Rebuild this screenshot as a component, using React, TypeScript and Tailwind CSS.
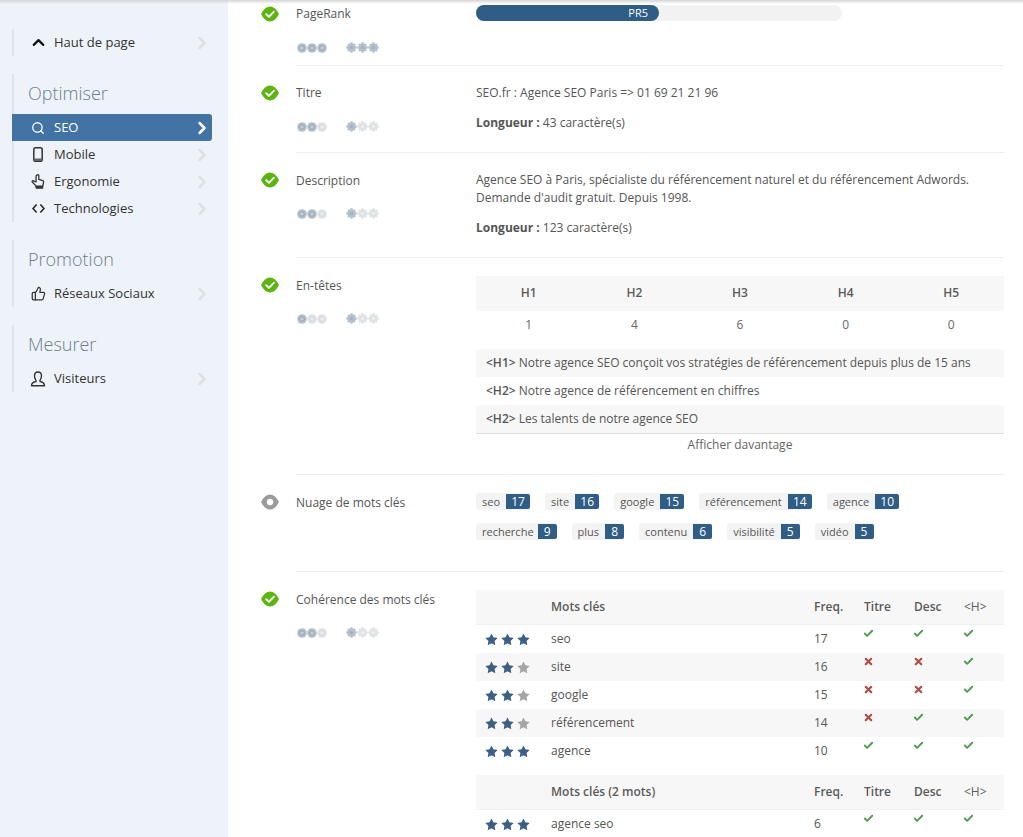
import React from "react";
import { ChevronUp, ChevronRight, Search, ThumbsUp, Check, X } from "lucide-react";

const font = { fontFamily: '"Open Sans", sans-serif' };

function Leaf({ kind }: { kind: "ok" | "eye" }) {
  const fill = kind === "ok" ? "#5cb50f" : "#9b9b9b";
  return (
    <svg width="18" height="16" viewBox="0 0 18 16" className="ml-px">
      <path d="M0 8 C2.5 3 5.5 0.5 9 0.5 C12.5 0.5 15.5 3 18 8 C15.5 13 12.5 15.5 9 15.5 C5.5 15.5 2.5 13 0 8 Z" fill={fill} />
      {kind === "ok" ? (
        <path d="M5.2 8.2 L8 10.8 L12.8 5.8" fill="none" stroke="#fff" strokeWidth="1.9" strokeLinecap="round" strokeLinejoin="round" />
      ) : (
        <circle cx="9" cy="8" r="3.2" fill="#fff" />
      )}
    </svg>
  );
}

function Target({ on }: { on: boolean }) {
  const c = on ? "#b4c1cc" : "#e0e3e6";
  return (
    <svg width="10" height="10" viewBox="0 0 10 10">
      <circle cx="5" cy="5" r="4.8" fill={c} />
      <circle cx="5" cy="5" r="2.3" fill={on ? "#c6d0d9" : "#eceef0"} stroke={on ? "#8fa2b2" : "#d2d6da"} strokeWidth="1" />
    </svg>
  );
}

function Gear({ on }: { on: boolean }) {
  const c = on ? "#b4c1cc" : "#e0e3e6";
  return (
    <svg width="11" height="11" viewBox="0 0 11 11">
      <g stroke={c} strokeWidth="2.4">
        <line x1="5.5" y1="0.3" x2="5.5" y2="10.7" />
        <line x1="0.3" y1="5.5" x2="10.7" y2="5.5" />
        <line x1="2" y1="2" x2="9" y2="9" />
        <line x1="9" y1="2" x2="2" y2="9" />
      </g>
      <circle cx="5.5" cy="5.5" r="4" fill={c} />
      <circle cx="5.5" cy="5.5" r="1.5" fill={on ? "#9fb0be" : "#eef0f2"} />
    </svg>
  );
}

function Rating({ a, b }: { a: number; b: number }) {
  return (
    <div className="flex items-center gap-[18px] pl-px">
      <div className="flex w-[31px]">
        {[0, 1, 2].map((i) => (
          <Target key={i} on={i < a} />
        ))}
      </div>
      <div className="flex">
        {[0, 1, 2].map((i) => (
          <Gear key={i} on={i < b} />
        ))}
      </div>
    </div>
  );
}

function Row({
  icon = "ok",
  label,
  rating,
  h,
  pt,
  leafClass,
  labelClass,
  gapClass,
  children,
}: {
  icon?: "ok" | "eye";
  label: string;
  rating?: [number, number];
  h: string;
  pt: string;
  leafClass?: string;
  labelClass?: string;
  gapClass?: string;
  children: React.ReactNode;
}) {
  return (
    <div className={`flex ${h}`}>
      <div className={`w-9 shrink-0 ${pt} ${leafClass ?? ""}`}>
        <Leaf kind={icon} />
      </div>
      <div className={`flex flex-1 border-b border-[#eeeeee] ${pt}`}>
        <div className="w-[180px] shrink-0">
          <div className={`text-[12px] leading-[16px] text-[#555555] ${labelClass ?? "mt-px"}`}>{label}</div>
          {rating && (
            <div className={gapClass ?? "mt-[19px]"}>
              <Rating a={rating[0]} b={rating[1]} />
            </div>
          )}
        </div>
        <div className="flex-1 min-w-0">{children}</div>
      </div>
    </div>
  );
}

function NavItem({
  icon,
  label,
  active,
}: {
  icon: React.ReactNode;
  label: string;
  active?: boolean;
}) {
  return (
    <div
      className={`flex items-center h-[27px] text-[13px] ${
        active
          ? "-ml-0.5 pl-[15px] w-[200px] bg-[#4273a4] text-white rounded-r-[3px]"
          : "pl-[13px] w-[198px] text-[#333333]"
      }`}
    >
      <span className={`w-[22px] flex justify-center shrink-0 ${active ? "text-white" : "text-[#333333]"}`}>{icon}</span>
      <span className="ml-[5px] flex-1">{label}</span>
      <ChevronRight size={20} strokeWidth={3} className={active ? "text-white" : "text-[#dde1e6]"} />
    </div>
  );
}

function NavTitle({ children }: { children: string }) {
  return <div className="h-[40px] pl-[14px] pt-[5px] text-[18px] leading-[28px] font-light text-[#6b7f8f]">{children}</div>;
}

function Tag({ t, n, tight }: { t: string; n: number; tight?: boolean }) {
  return (
    <div className="flex items-center h-[17px] bg-[#f3f3f3] rounded-[3px] text-[11px] text-[#555555]">
      <span className={`pl-[6px] pt-px ${tight ? "pr-[4px]" : "pr-[6px]"}`}>{t}</span>
      <span
        className={`h-[15px] text-center bg-[#2f5d85] text-white text-[12px] leading-[16px] rounded-r-[2px] ${
          n >= 10 ? "w-[24px]" : "w-[19px]"
        }`}
      >
        {n}
      </span>
    </div>
  );
}

function Star({ on }: { on: boolean }) {
  return (
    <svg width="13" height="13" viewBox="0 0 24 24">
      <path
        d="M12 0.8 L15.5 8 L23.4 9.2 L17.7 14.8 L19 22.8 L12 19 L5 22.8 L6.3 14.8 L0.6 9.2 L8.5 8 Z"
        fill={on ? "#3c5f84" : "#a5a5a5"}
      />
    </svg>
  );
}

const cols = "grid grid-cols-[75px_263px_50px_50px_50px_1fr] items-center";

function KeyHeader({ title }: { title: string }) {
  return (
    <div className={`${cols} h-[35px] bg-[#f7f7f7] border-b border-[#f0f0f0] text-[12px] font-semibold text-[#5a5a5a]`}>
      <span />
      <span>{title}</span>
      <span>Freq.</span>
      <span>Titre</span>
      <span>Desc</span>
      <span className="font-normal">&lt;H&gt;</span>
    </div>
  );
}

function Mark({ ok }: { ok: boolean }) {
  return (
    <span className="block -mt-[12px] -ml-px">
      {ok ? (
        <Check size={11} strokeWidth={4} className="text-[#4f9a4f]" />
      ) : (
        <X size={11} strokeWidth={4.5} className="text-[#b04a45]" />
      )}
    </span>
  );
}

function KeyRow({
  stars,
  word,
  freq,
  marks,
  alt,
}: {
  stars: number;
  word: string;
  freq: number;
  marks: [boolean, boolean, boolean];
  alt?: boolean;
}) {
  return (
    <div className={`${cols} h-[28px] text-[12px] text-[#555555] ${alt ? "bg-[#f7f7f7]" : ""}`}>
      <div className="flex gap-[3px] pl-[9px]">
        {[0, 1, 2].map((i) => (
          <Star key={i} on={i < stars} />
        ))}
      </div>
      <span>{word}</span>
      <span>{freq}</span>
      {marks.map((m, i) => (
        <Mark key={i} ok={m} />
      ))}
    </div>
  );
}

export default function App() {
  const tags1: [string, number][] = [
    ["seo", 17],
    ["site", 16],
    ["google", 15],
    ["référencement", 14],
    ["agence", 10],
  ];
  const tags2: [string, number][] = [
    ["recherche", 9],
    ["plus", 8],
    ["contenu", 6],
    ["visibilité", 5],
    ["vidéo", 5],
  ];
  const headings = ["H1", "H2", "H3", "H4", "H5"];
  const counts = [1, 4, 6, 0, 0];
  return (
    <div style={font} className="relative flex h-[837px] w-[1023px] overflow-hidden bg-white">
      <div className="absolute inset-x-0 top-0 h-[4px] bg-gradient-to-b from-[#d5d5d5] to-transparent" />
      <aside className="w-[228px] shrink-0 bg-[#eef2f9] pt-[29px] pl-[12px] flex flex-col gap-[18px]">
        <div className="border-l-2 border-[#dde3ea]">
          <NavItem icon={<ChevronUp size={19} strokeWidth={2.8} className="text-[#111111]" />} label="Haut de page" />
        </div>
        <div className="border-l-2 border-[#dde3ea]">
          <NavTitle>Optimiser</NavTitle>
          <NavItem icon={<Search size={14} strokeWidth={2.2} />} label="SEO" active />
          <NavItem
            icon={
              <svg width="10" height="15" viewBox="0 0 10 15">
                <rect x="0.8" y="0.8" width="8.4" height="13.4" rx="1.8" fill="none" stroke="#333" strokeWidth="1.5" />
                <rect x="1" y="11.5" width="8" height="2.6" fill="#666" />
              </svg>
            }
            label="Mobile"
          />
          <NavItem
            icon={
              <svg width="14" height="15" viewBox="0 0 14 15">
                <path
                  d="M6 1 Q7 0.4 7.8 1.2 L7.8 5.4 L11.8 6.6 Q12.8 7 12.6 8.2 L11.8 12 L11.6 14 L5.2 14 L4.8 11.6 L1.2 8 Q0.8 6.8 2 6.6 L5 8 L5 2 Z"
                  fill="none"
                  stroke="#333"
                  strokeWidth="1.3"
                  strokeLinejoin="round"
                />
                <rect x="5" y="11.5" width="6.8" height="2.6" fill="#333" />
              </svg>
            }
            label="Ergonomie"
          />
          <NavItem
            icon={
              <svg width="13" height="11" viewBox="0 0 13 11">
                <path d="M4.6 1.5 L1 5.5 L4.6 9.5 M8.4 1.5 L12 5.5 L8.4 9.5" fill="none" stroke="#222" strokeWidth="1.5" />
              </svg>
            }
            label="Technologies"
          />
        </div>
        <div className="border-l-2 border-[#dde3ea]">
          <NavTitle>Promotion</NavTitle>
          <NavItem icon={<ThumbsUp size={15} strokeWidth={2} />} label="Réseaux Sociaux" />
        </div>
        <div className="border-l-2 border-[#dde3ea]">
          <NavTitle>Mesurer</NavTitle>
          <NavItem
            icon={
              <svg width="16" height="16" viewBox="0 0 16 16">
                <path
                  d="M8 1 C5.5 1 4.5 3 4.5 5 C4.5 7 5.5 8.5 6 9.5 L6 10.5 C4 11 1.5 11.5 1.5 14.8 L14.5 14.8 C14.5 11.5 12 11 10 10.5 L10 9.5 C10.5 8.5 11.5 7 11.5 5 C11.5 3 10.5 1 8 1 Z"
                  fill="none"
                  stroke="#333"
                  strokeWidth="1.4"
                  strokeLinejoin="round"
                />
              </svg>
            }
            label="Visiteurs"
          />
        </div>
      </aside>

      <main className="flex-1 pl-[32px] pr-[19px]">
        <Row label="PageRank" rating={[3, 3]} h="h-[66px]" pt="pt-[6px]" labelClass="mt-0" gapClass="mt-[20px]">
          <div className="h-[16px] w-[366px] -mt-px rounded-full bg-[#f2f2f2]">
            <div className="h-full w-[183px] pr-[11px] rounded-full bg-[#2f5d85] text-white text-[11px] leading-[16px] text-right">PR5</div>
          </div>
        </Row>
        <Row label="Titre" rating={[2, 1]} h="h-[87px]" pt="pt-[18px]" leafClass="mt-px" gapClass="mt-[20px]">
          <div className="mt-px text-[12px] leading-[16px] text-[#555555]">SEO.fr : Agence SEO Paris =&gt; 01 69 21 21 96</div>
          <div className="mt-[14px] text-[12px] leading-[16px] text-[#555555]">
            <span className="font-bold">Longueur :</span> 43 caractère(s)
          </div>
        </Row>
        <Row label="Description" rating={[2, 1]} h="h-[105px]" pt="pt-[19px]">
          <div className="-mt-px text-[12px] leading-[18px] text-[#555555]">
            Agence SEO à Paris, spécialiste du référencement naturel et du référencement Adwords.
            <br />
            Demande d'audit gratuit. Depuis 1998.
          </div>
          <div className="mt-[13px] text-[12px] leading-[16px] text-[#555555]">
            <span className="font-bold">Longueur :</span> 123 caractère(s)
          </div>
        </Row>
        <Row label="En-têtes" rating={[1, 1]} h="h-[217px]" pt="pt-[19px]">
          <div className="-mt-px">
            <div className="grid grid-cols-5 h-[35px] pb-[2px] items-center bg-[#f7f7f7] text-center text-[12px] font-semibold text-[#5a5a5a]">
              {headings.map((x) => (
                <span key={x}>{x}</span>
              ))}
            </div>
            <div className="grid grid-cols-5 h-[28px] items-center text-center text-[12px] text-[#666666]">
              {counts.map((x, i) => (
                <span key={i}>{x}</span>
              ))}
            </div>
            <div className="mt-[10px] border-b border-[#dddddd] text-[12px] text-[#555555]">
              <div className="h-[28px] flex items-center bg-[#f7f7f7] pl-[10px]">
                <span><span className="font-semibold">&lt;H1&gt;</span> Notre agence SEO conçoit vos stratégies de référencement depuis plus de 15 ans</span>
              </div>
              <div className="h-[28px] flex items-center pl-[10px]">
                <span><span className="font-semibold">&lt;H2&gt;</span> Notre agence de référencement en chiffres</span>
              </div>
              <div className="h-[28px] flex items-center bg-[#f7f7f7] pl-[10px]">
                <span><span className="font-semibold">&lt;H2&gt;</span> Les talents de notre agence SEO</span>
              </div>
            </div>
            <div className="mt-[3px] text-center text-[12px] leading-[16px] text-[#666666]">Afficher davantage</div>
          </div>
        </Row>
        <Row icon="eye" label="Nuage de mots clés" h="h-[97px]" pt="pt-[19px]">
          <div className="-mt-px flex flex-col gap-[13px]">
            <div className="flex gap-[15px]">
              {tags1.map(([t, n]) => (
                <Tag key={t} t={t} n={n} />
              ))}
            </div>
            <div className="flex gap-[15px]">
              {tags2.map(([t, n]) => (
                <Tag key={t} t={t} n={n} tight={t === "recherche"} />
              ))}
            </div>
          </div>
        </Row>
        <Row label="Cohérence des mots clés" rating={[2, 1]} h="h-[280px]" pt="pt-[19px]">
          <div className="-mt-px">
            <KeyHeader title="Mots clés" />
            <KeyRow stars={3} word="seo" freq={17} marks={[true, true, true]} />
            <KeyRow stars={2} word="site" freq={16} marks={[false, false, true]} alt />
            <KeyRow stars={2} word="google" freq={15} marks={[false, false, true]} />
            <KeyRow stars={2} word="référencement" freq={14} marks={[false, true, true]} alt />
            <KeyRow stars={3} word="agence" freq={10} marks={[true, true, true]} />
            <div className="h-[10px]" />
            <KeyHeader title="Mots clés (2 mots)" />
            <KeyRow stars={3} word="agence seo" freq={6} marks={[true, true, true]} />
          </div>
        </Row>
      </main>
    </div>
  );
}
